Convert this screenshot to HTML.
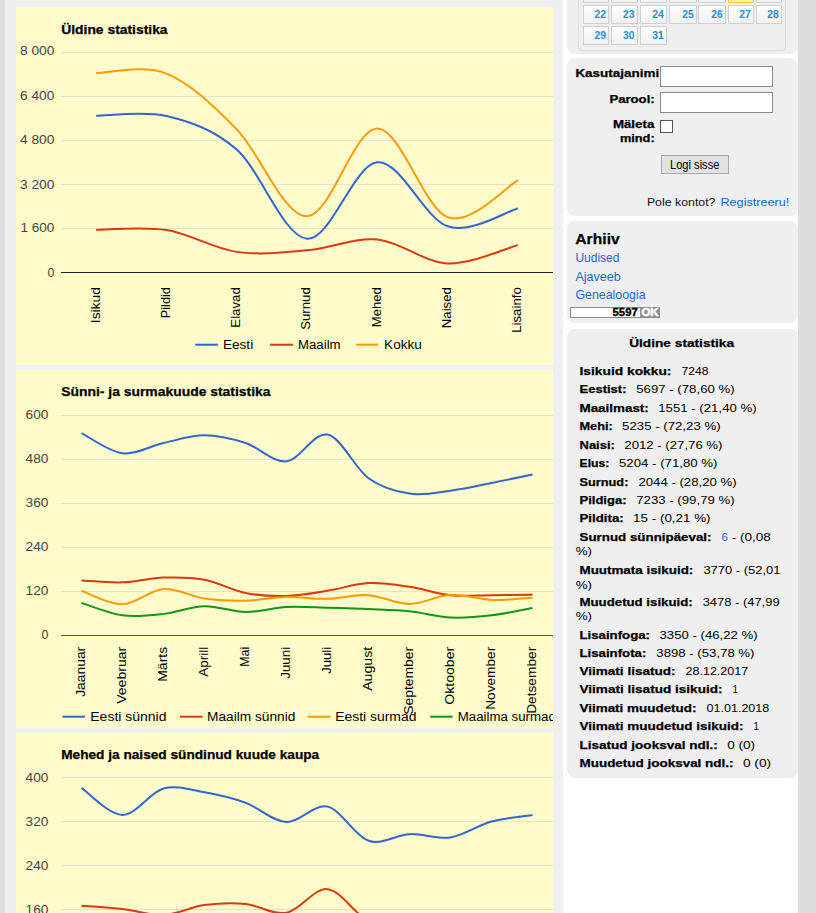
<!DOCTYPE html>
<html><head><meta charset="utf-8">
<style>
html,body{margin:0;padding:0;}
body{width:816px;height:913px;overflow:hidden;position:relative;background:#efefef;font-family:"Liberation Sans", sans-serif;}
.abs{position:absolute;}
svg text{font-family:"Liberation Sans", sans-serif;}
</style></head><body>
<div class="abs" style="left:0;top:0;width:5px;height:913px;background:#dddddd"></div>
<div class="abs" style="left:798px;top:0;width:18px;height:913px;background:#dddddd"></div>
<div class="abs" style="left:563px;top:0;width:235px;height:913px;background:#fff"></div>
<div class="abs" style="left:16px;top:7px;width:537px;height:358px;background:#fffccc"></div>
<div class="abs" style="left:16px;top:370px;width:537px;height:358px;background:#fffccc"></div>
<div class="abs" style="left:16px;top:732px;width:537px;height:1px;background:#f7f6de"></div>
<div class="abs" style="left:16px;top:733px;width:537px;height:358px;background:#fffccc"></div>
<svg class="abs" style="left:0;top:0" width="553" height="913" viewBox="0 0 553 913">
<defs><clipPath id="cp1"><rect x="16" y="7" width="537" height="358"/></clipPath>
<clipPath id="cp2"><rect x="16" y="370" width="537" height="358"/></clipPath>
<clipPath id="cp3"><rect x="16" y="732.5" width="537" height="358"/></clipPath></defs>
<g clip-path="url(#cp1)"><rect x="61" y="52" width="492" height="1" fill="#e3e2ca"/>
<rect x="61" y="96" width="492" height="1" fill="#e3e2ca"/>
<rect x="61" y="140" width="492" height="1" fill="#e3e2ca"/>
<rect x="61" y="184" width="492" height="1" fill="#e3e2ca"/>
<rect x="61" y="228" width="492" height="1" fill="#e3e2ca"/>
<text x="54.40" y="55.35" font-size="12.8" fill="#444" text-anchor="end" textLength="34.50" lengthAdjust="spacingAndGlyphs">8 000</text>
<text x="54.40" y="99.60" font-size="12.8" fill="#444" text-anchor="end" textLength="34.50" lengthAdjust="spacingAndGlyphs">6 400</text>
<text x="54.40" y="143.60" font-size="12.8" fill="#444" text-anchor="end" textLength="34.50" lengthAdjust="spacingAndGlyphs">4 800</text>
<text x="54.40" y="188.60" font-size="12.8" fill="#444" text-anchor="end" textLength="34.50" lengthAdjust="spacingAndGlyphs">3 200</text>
<text x="54.40" y="232.40" font-size="12.8" fill="#444" text-anchor="end" textLength="34.00" lengthAdjust="spacingAndGlyphs">1 600</text>
<text x="54.40" y="276.50" font-size="12.8" fill="#444" text-anchor="end" textLength="6.90" lengthAdjust="spacingAndGlyphs">0</text>
<rect x="61" y="272" width="492" height="1" fill="#222222"/>
<g transform="translate(99.54,287.20) rotate(-90)"><text x="0.00" y="0.00" font-size="12.3" text-anchor="end" textLength="36.00" lengthAdjust="spacingAndGlyphs">Isikud</text></g>
<g transform="translate(169.83,287.20) rotate(-90)"><text x="0.00" y="0.00" font-size="12.3" text-anchor="end" textLength="31.00" lengthAdjust="spacingAndGlyphs">Pildid</text></g>
<g transform="translate(240.11,287.20) rotate(-90)"><text x="0.00" y="0.00" font-size="12.3" text-anchor="end" textLength="40.50" lengthAdjust="spacingAndGlyphs">Elavad</text></g>
<g transform="translate(310.40,287.20) rotate(-90)"><text x="0.00" y="0.00" font-size="12.3" text-anchor="end" textLength="42.60" lengthAdjust="spacingAndGlyphs">Surnud</text></g>
<g transform="translate(380.69,287.20) rotate(-90)"><text x="0.00" y="0.00" font-size="12.3" text-anchor="end" textLength="40.00" lengthAdjust="spacingAndGlyphs">Mehed</text></g>
<g transform="translate(450.97,287.20) rotate(-90)"><text x="0.00" y="0.00" font-size="12.3" text-anchor="end" textLength="41.00" lengthAdjust="spacingAndGlyphs">Naised</text></g>
<g transform="translate(521.26,287.20) rotate(-90)"><text x="0.00" y="0.00" font-size="12.3" text-anchor="end" textLength="45.60" lengthAdjust="spacingAndGlyphs">Lisainfo</text></g>
<path d="M96.14,115.83 C107.86,115.86 143.00,110.40 166.43,116.03 C189.86,121.65 213.29,129.11 236.71,149.57 C260.14,170.04 283.57,236.70 307.00,238.81 C330.43,240.92 353.86,164.31 377.29,162.22 C400.71,160.14 424.14,218.60 447.57,226.30 C471.00,234.00 506.14,211.40 517.86,208.43" fill="none" stroke="#3366cc" stroke-width="2"/>
<path d="M96.14,229.85 C107.86,229.88 143.00,226.34 166.43,230.01 C189.86,233.68 213.29,248.48 236.71,251.88 C260.14,255.27 283.57,252.43 307.00,250.36 C330.43,248.30 353.86,237.32 377.29,239.50 C400.71,241.68 424.14,262.49 447.57,263.43 C471.00,264.36 506.14,248.19 517.86,245.14" fill="none" stroke="#dc3912" stroke-width="2"/>
<path d="M96.14,73.18 C107.86,73.25 143.00,64.22 166.43,73.59 C189.86,82.96 213.29,105.61 236.71,129.39 C260.14,153.17 283.57,216.43 307.00,216.29 C330.43,216.15 353.86,128.39 377.29,128.54 C400.71,128.68 424.14,208.53 447.57,217.17 C471.00,225.81 506.14,186.51 517.86,180.38" fill="none" stroke="#ff9900" stroke-width="2"/>
<rect x="195.30" y="343.70" width="22.60" height="2" fill="#3366cc"/>
<text x="222.90" y="349.10" font-size="12.3" textLength="30.30" lengthAdjust="spacingAndGlyphs">Eesti</text>
<rect x="270.00" y="343.70" width="23.00" height="2" fill="#dc3912"/>
<text x="298.00" y="349.10" font-size="12.3" textLength="42.60" lengthAdjust="spacingAndGlyphs">Maailm</text>
<rect x="356.20" y="343.70" width="22.00" height="2" fill="#ff9900"/>
<text x="384.10" y="349.10" font-size="12.3" textLength="37.70" lengthAdjust="spacingAndGlyphs">Kokku</text>
<text x="61.20" y="33.80" font-size="12.3" font-weight="bold" fill="#000" textLength="106.40" lengthAdjust="spacingAndGlyphs" stroke="#000" stroke-width="0.25">Üldine statistika</text></g>
<g clip-path="url(#cp2)"><rect x="61" y="415" width="492" height="1" fill="#e3e2ca"/>
<rect x="61" y="459" width="492" height="1" fill="#e3e2ca"/>
<rect x="61" y="503" width="492" height="1" fill="#e3e2ca"/>
<rect x="61" y="547" width="492" height="1" fill="#e3e2ca"/>
<rect x="61" y="591" width="492" height="1" fill="#e3e2ca"/>
<text x="48.40" y="418.65" font-size="12.8" fill="#444" text-anchor="end" textLength="22.80" lengthAdjust="spacingAndGlyphs">600</text>
<text x="48.40" y="462.65" font-size="12.8" fill="#444" text-anchor="end" textLength="22.80" lengthAdjust="spacingAndGlyphs">480</text>
<text x="48.40" y="506.65" font-size="12.8" fill="#444" text-anchor="end" textLength="22.80" lengthAdjust="spacingAndGlyphs">360</text>
<text x="48.40" y="550.65" font-size="12.8" fill="#444" text-anchor="end" textLength="22.80" lengthAdjust="spacingAndGlyphs">240</text>
<text x="48.40" y="594.65" font-size="12.8" fill="#444" text-anchor="end" textLength="22.80" lengthAdjust="spacingAndGlyphs">120</text>
<text x="48.40" y="638.65" font-size="12.8" fill="#444" text-anchor="end" textLength="6.90" lengthAdjust="spacingAndGlyphs">0</text>
<rect x="61" y="635" width="492" height="1" fill="#555555"/>
<g transform="translate(84.90,646.80) rotate(-90)"><text x="0.00" y="0.00" font-size="12.3" text-anchor="end" textLength="50.00" lengthAdjust="spacingAndGlyphs">Jaanuar</text></g>
<g transform="translate(125.90,646.80) rotate(-90)"><text x="0.00" y="0.00" font-size="12.3" text-anchor="end" textLength="57.00" lengthAdjust="spacingAndGlyphs">Veebruar</text></g>
<g transform="translate(166.90,646.80) rotate(-90)"><text x="0.00" y="0.00" font-size="12.3" text-anchor="end" textLength="35.00" lengthAdjust="spacingAndGlyphs">Märts</text></g>
<g transform="translate(207.90,646.80) rotate(-90)"><text x="0.00" y="0.00" font-size="12.3" text-anchor="end" textLength="30.00" lengthAdjust="spacingAndGlyphs">Aprill</text></g>
<g transform="translate(248.90,646.80) rotate(-90)"><text x="0.00" y="0.00" font-size="12.3" text-anchor="end" textLength="20.00" lengthAdjust="spacingAndGlyphs">Mai</text></g>
<g transform="translate(289.90,646.80) rotate(-90)"><text x="0.00" y="0.00" font-size="12.3" text-anchor="end" textLength="32.00" lengthAdjust="spacingAndGlyphs">Juuni</text></g>
<g transform="translate(330.90,646.80) rotate(-90)"><text x="0.00" y="0.00" font-size="12.3" text-anchor="end" textLength="27.00" lengthAdjust="spacingAndGlyphs">Juuli</text></g>
<g transform="translate(371.90,646.80) rotate(-90)"><text x="0.00" y="0.00" font-size="12.3" text-anchor="end" textLength="44.00" lengthAdjust="spacingAndGlyphs">August</text></g>
<g transform="translate(412.90,646.80) rotate(-90)"><text x="0.00" y="0.00" font-size="12.3" text-anchor="end" textLength="68.00" lengthAdjust="spacingAndGlyphs">September</text></g>
<g transform="translate(453.90,646.80) rotate(-90)"><text x="0.00" y="0.00" font-size="12.3" text-anchor="end" textLength="58.00" lengthAdjust="spacingAndGlyphs">Oktoober</text></g>
<g transform="translate(494.90,646.80) rotate(-90)"><text x="0.00" y="0.00" font-size="12.3" text-anchor="end" textLength="63.00" lengthAdjust="spacingAndGlyphs">November</text></g>
<g transform="translate(535.90,646.80) rotate(-90)"><text x="0.00" y="0.00" font-size="12.3" text-anchor="end" textLength="67.00" lengthAdjust="spacingAndGlyphs">Detsember</text></g>
<path d="M81.50,433.10 C88.33,436.46 108.83,451.62 122.50,453.27 C136.17,454.92 149.83,445.99 163.50,443.00 C177.17,440.01 190.83,435.30 204.50,435.30 C218.17,435.30 231.83,438.66 245.50,443.00 C259.17,447.34 272.83,462.74 286.50,461.33 C300.17,459.93 313.83,431.76 327.50,434.57 C341.17,437.38 354.83,468.36 368.50,478.20 C382.17,488.04 395.83,491.52 409.50,493.60 C423.17,495.68 436.83,492.44 450.50,490.67 C464.17,488.89 477.83,485.66 491.50,482.97 C505.17,480.28 525.67,475.94 532.50,474.53" fill="none" stroke="#3366cc" stroke-width="2"/>
<path d="M81.50,580.50 C88.33,580.81 108.83,582.82 122.50,582.33 C136.17,581.84 149.83,577.99 163.50,577.57 C177.17,577.14 190.83,577.20 204.50,579.77 C218.17,582.33 231.83,590.28 245.50,592.97 C259.17,595.66 272.83,596.27 286.50,595.90 C300.17,595.53 313.83,592.91 327.50,590.77 C341.17,588.63 354.83,583.74 368.50,583.07 C382.17,582.39 395.83,584.72 409.50,586.73 C423.17,588.75 436.83,593.76 450.50,595.17 C464.17,596.57 477.83,595.23 491.50,595.17 C505.17,595.11 525.67,594.86 532.50,594.80" fill="none" stroke="#dc3912" stroke-width="2"/>
<path d="M81.50,590.77 C88.33,593.03 108.83,604.64 122.50,604.33 C136.17,604.03 149.83,589.91 163.50,588.93 C177.17,587.96 190.83,596.51 204.50,598.47 C218.17,600.42 231.83,600.91 245.50,600.67 C259.17,600.42 272.83,597.31 286.50,597.00 C300.17,596.69 313.83,599.14 327.50,598.83 C341.17,598.53 354.83,594.31 368.50,595.17 C382.17,596.02 395.83,604.03 409.50,603.97 C423.17,603.91 436.83,595.47 450.50,594.80 C464.17,594.13 477.83,599.44 491.50,599.93 C505.17,600.42 525.67,598.10 532.50,597.73" fill="none" stroke="#ff9900" stroke-width="2"/>
<path d="M81.50,602.87 C88.33,604.94 108.83,613.50 122.50,615.33 C136.17,617.17 149.83,615.39 163.50,613.87 C177.17,612.34 190.83,606.47 204.50,606.17 C218.17,605.86 231.83,611.91 245.50,612.03 C259.17,612.16 272.83,607.63 286.50,606.90 C300.17,606.17 313.83,607.27 327.50,607.63 C341.17,608.00 354.83,608.49 368.50,609.10 C382.17,609.71 395.83,609.89 409.50,611.30 C423.17,612.71 436.83,616.86 450.50,617.53 C464.17,618.21 477.83,616.92 491.50,615.33 C505.17,613.74 525.67,609.22 532.50,608.00" fill="none" stroke="#109618" stroke-width="2"/>
<rect x="62.40" y="715.70" width="22.60" height="2" fill="#3366cc"/>
<text x="90.30" y="721.10" font-size="12.3" textLength="76.20" lengthAdjust="spacingAndGlyphs">Eesti sünnid</text>
<rect x="180.00" y="715.70" width="22.60" height="2" fill="#dc3912"/>
<text x="207.00" y="721.10" font-size="12.3" textLength="88.30" lengthAdjust="spacingAndGlyphs">Maailm sünnid</text>
<rect x="307.70" y="715.70" width="22.90" height="2" fill="#ff9900"/>
<text x="335.20" y="721.10" font-size="12.3" textLength="81.20" lengthAdjust="spacingAndGlyphs">Eesti surmad</text>
<rect x="430.20" y="715.70" width="22.40" height="2" fill="#109618"/>
<text x="457.80" y="721.10" font-size="12.3" textLength="98.00" lengthAdjust="spacingAndGlyphs">Maailma surmad</text>
<text x="61.20" y="396.00" font-size="12.3" font-weight="bold" fill="#000" textLength="209.30" lengthAdjust="spacingAndGlyphs" stroke="#000" stroke-width="0.25">Sünni- ja surmakuude statistika</text></g>
<g clip-path="url(#cp3)"><rect x="61" y="777" width="492" height="1" fill="#e3e2ca"/>
<rect x="61" y="821" width="492" height="1" fill="#e3e2ca"/>
<rect x="61" y="865" width="492" height="1" fill="#e3e2ca"/>
<rect x="61" y="909" width="492" height="1" fill="#e3e2ca"/>
<rect x="61" y="953" width="492" height="1" fill="#e3e2ca"/>
<text x="48.40" y="781.80" font-size="12.8" fill="#444" text-anchor="end" textLength="22.80" lengthAdjust="spacingAndGlyphs">400</text>
<text x="48.40" y="825.80" font-size="12.8" fill="#444" text-anchor="end" textLength="22.80" lengthAdjust="spacingAndGlyphs">320</text>
<text x="48.40" y="869.80" font-size="12.8" fill="#444" text-anchor="end" textLength="22.80" lengthAdjust="spacingAndGlyphs">240</text>
<text x="48.40" y="913.80" font-size="12.8" fill="#444" text-anchor="end" textLength="22.80" lengthAdjust="spacingAndGlyphs">160</text>
<text x="48.40" y="957.80" font-size="12.8" fill="#444" text-anchor="end" textLength="15.20" lengthAdjust="spacingAndGlyphs">80</text>
<text x="48.40" y="1001.80" font-size="12.8" fill="#444" text-anchor="end" textLength="6.90" lengthAdjust="spacingAndGlyphs">0</text>
<rect x="61" y="997" width="492" height="1" fill="#555555"/>
<g transform="translate(84.90,1009.00) rotate(-90)"><text x="0.00" y="0.00" font-size="12.3" text-anchor="end" textLength="50.00" lengthAdjust="spacingAndGlyphs">Jaanuar</text></g>
<g transform="translate(125.90,1009.00) rotate(-90)"><text x="0.00" y="0.00" font-size="12.3" text-anchor="end" textLength="57.00" lengthAdjust="spacingAndGlyphs">Veebruar</text></g>
<g transform="translate(166.90,1009.00) rotate(-90)"><text x="0.00" y="0.00" font-size="12.3" text-anchor="end" textLength="35.00" lengthAdjust="spacingAndGlyphs">Märts</text></g>
<g transform="translate(207.90,1009.00) rotate(-90)"><text x="0.00" y="0.00" font-size="12.3" text-anchor="end" textLength="30.00" lengthAdjust="spacingAndGlyphs">Aprill</text></g>
<g transform="translate(248.90,1009.00) rotate(-90)"><text x="0.00" y="0.00" font-size="12.3" text-anchor="end" textLength="20.00" lengthAdjust="spacingAndGlyphs">Mai</text></g>
<g transform="translate(289.90,1009.00) rotate(-90)"><text x="0.00" y="0.00" font-size="12.3" text-anchor="end" textLength="32.00" lengthAdjust="spacingAndGlyphs">Juuni</text></g>
<g transform="translate(330.90,1009.00) rotate(-90)"><text x="0.00" y="0.00" font-size="12.3" text-anchor="end" textLength="27.00" lengthAdjust="spacingAndGlyphs">Juuli</text></g>
<g transform="translate(371.90,1009.00) rotate(-90)"><text x="0.00" y="0.00" font-size="12.3" text-anchor="end" textLength="44.00" lengthAdjust="spacingAndGlyphs">August</text></g>
<g transform="translate(412.90,1009.00) rotate(-90)"><text x="0.00" y="0.00" font-size="12.3" text-anchor="end" textLength="68.00" lengthAdjust="spacingAndGlyphs">September</text></g>
<g transform="translate(453.90,1009.00) rotate(-90)"><text x="0.00" y="0.00" font-size="12.3" text-anchor="end" textLength="58.00" lengthAdjust="spacingAndGlyphs">Oktoober</text></g>
<g transform="translate(494.90,1009.00) rotate(-90)"><text x="0.00" y="0.00" font-size="12.3" text-anchor="end" textLength="63.00" lengthAdjust="spacingAndGlyphs">November</text></g>
<g transform="translate(535.90,1009.00) rotate(-90)"><text x="0.00" y="0.00" font-size="12.3" text-anchor="end" textLength="67.00" lengthAdjust="spacingAndGlyphs">Detsember</text></g>
<path d="M81.50,787.95 C88.33,792.44 108.83,814.81 122.50,814.90 C136.17,814.99 149.83,792.26 163.50,788.50 C177.17,784.74 190.83,789.97 204.50,792.35 C218.17,794.73 231.83,797.85 245.50,802.80 C259.17,807.75 272.83,821.41 286.50,822.05 C300.17,822.69 313.83,803.53 327.50,806.65 C341.17,809.77 354.83,836.17 368.50,840.75 C382.17,845.33 395.83,834.70 409.50,834.15 C423.17,833.60 436.83,839.56 450.50,837.45 C464.17,835.34 477.83,825.26 491.50,821.50 C505.17,817.74 525.67,816.00 532.50,814.90" fill="none" stroke="#3366cc" stroke-width="2"/>
<path d="M81.50,905.65 C88.33,906.20 108.83,907.39 122.50,908.95 C136.17,910.51 149.83,915.64 163.50,915.00 C177.17,914.36 190.83,906.93 204.50,905.10 C218.17,903.27 231.83,902.72 245.50,904.00 C259.17,905.28 272.83,915.27 286.50,912.80 C300.17,910.32 313.83,887.87 327.50,889.15 C341.17,890.43 354.83,915.27 368.50,920.50 C382.17,925.73 395.83,920.50 409.50,920.50 C423.17,920.50 436.83,920.50 450.50,920.50 C464.17,920.50 477.83,920.50 491.50,920.50 C505.17,920.50 525.67,920.50 532.50,920.50" fill="none" stroke="#dc3912" stroke-width="2"/>
<text x="61.20" y="758.50" font-size="12.3" font-weight="bold" fill="#000" textLength="258.00" lengthAdjust="spacingAndGlyphs" stroke="#000" stroke-width="0.25">Mehed ja naised sündinud kuude kaupa</text></g>
</svg>
<div class="abs" style="left:567px;top:-20px;width:231px;height:74px;background:#efefef;border-radius:8px"></div>
<div class="abs" style="left:567px;top:58px;width:231px;height:157.6px;background:#efefef;border-radius:8px"></div>
<div class="abs" style="left:567px;top:221px;width:231px;height:101.8px;background:#efefef;border-radius:8px"></div>
<div class="abs" style="left:567px;top:329.3px;width:231px;height:449px;background:#efefef;border-radius:8px"></div>
<div class="abs" style="left:578px;top:-30px;width:206px;height:79px;border:1px solid #dcdcdc;border-radius:4px"></div>
<div class="abs" style="left:583px;top:-16px;width:24.00px;height:17.00px;border:1px solid #cfcfcf;background:linear-gradient(#fdfdfd,#f1f1f1)"></div>
<div class="abs" style="left:611.2px;top:-16px;width:24.40px;height:17.00px;border:1px solid #cfcfcf;background:linear-gradient(#fdfdfd,#f1f1f1)"></div>
<div class="abs" style="left:640px;top:-16px;width:24.70px;height:17.00px;border:1px solid #cfcfcf;background:linear-gradient(#fdfdfd,#f1f1f1)"></div>
<div class="abs" style="left:669.1px;top:-16px;width:25.70px;height:17.00px;border:1px solid #cfcfcf;background:linear-gradient(#fdfdfd,#f1f1f1)"></div>
<div class="abs" style="left:698.3px;top:-16px;width:25.50px;height:17.00px;border:1px solid #cfcfcf;background:linear-gradient(#fdfdfd,#f1f1f1)"></div>
<div class="abs" style="left:728.1px;top:-16px;width:23.70px;height:17.00px;border:1px solid #fbcf3c;background:#fdeea6"></div>
<div class="abs" style="left:756.3px;top:-16px;width:23.40px;height:17.00px;border:1px solid #cfcfcf;background:linear-gradient(#fdfdfd,#f1f1f1)"></div>
<div class="abs" style="left:583px;top:5px;width:24.00px;height:17.00px;border:1px solid #cfcfcf;background:linear-gradient(#fdfdfd,#f1f1f1)"></div>
<div class="abs" style="left:611.2px;top:5px;width:24.40px;height:17.00px;border:1px solid #cfcfcf;background:linear-gradient(#fdfdfd,#f1f1f1)"></div>
<div class="abs" style="left:640px;top:5px;width:24.70px;height:17.00px;border:1px solid #cfcfcf;background:linear-gradient(#fdfdfd,#f1f1f1)"></div>
<div class="abs" style="left:669.1px;top:5px;width:25.70px;height:17.00px;border:1px solid #cfcfcf;background:linear-gradient(#fdfdfd,#f1f1f1)"></div>
<div class="abs" style="left:698.3px;top:5px;width:25.50px;height:17.00px;border:1px solid #cfcfcf;background:linear-gradient(#fdfdfd,#f1f1f1)"></div>
<div class="abs" style="left:728.1px;top:5px;width:23.70px;height:17.00px;border:1px solid #cfcfcf;background:linear-gradient(#fdfdfd,#f1f1f1)"></div>
<div class="abs" style="left:756.3px;top:5px;width:23.40px;height:17.00px;border:1px solid #cfcfcf;background:linear-gradient(#fdfdfd,#f1f1f1)"></div>
<div class="abs" style="left:583px;top:26px;width:24.00px;height:17.00px;border:1px solid #cfcfcf;background:linear-gradient(#fdfdfd,#f1f1f1)"></div>
<div class="abs" style="left:611.2px;top:26px;width:24.40px;height:17.00px;border:1px solid #cfcfcf;background:linear-gradient(#fdfdfd,#f1f1f1)"></div>
<div class="abs" style="left:640px;top:26px;width:24.70px;height:17.00px;border:1px solid #cfcfcf;background:linear-gradient(#fdfdfd,#f1f1f1)"></div>
<div class="abs" style="left:660px;top:66px;width:111px;height:18.6px;border:1px solid #8a8a8a;background:#fff"></div>
<div class="abs" style="left:660px;top:92.4px;width:111px;height:18.2px;border:1px solid #8a8a8a;background:#fff"></div>
<div class="abs" style="left:660.2px;top:120.3px;width:10.9px;height:10.5px;border:1px solid #555;background:#fff"></div>
<div class="abs" style="left:661px;top:155px;width:65.8px;height:17px;border:1px solid #a9a9a9;background:#e1e1e1"></div>
<div class="abs" style="left:570px;top:307.1px;width:88.1px;height:8.7px;border:1px solid #8a8a8a;background:#fff"></div>
<div class="abs" style="left:640px;top:308.1px;width:19.1px;height:8.7px;background:#8f8f8f"></div>
<svg class="abs" style="left:0;top:0" width="816" height="913" viewBox="0 0 816 913"><text x="606.00" y="18.10" font-size="11" font-weight="bold" fill="#2390d0" text-anchor="end" textLength="11.50" lengthAdjust="spacingAndGlyphs">22</text>
<text x="634.60" y="18.10" font-size="11" font-weight="bold" fill="#2390d0" text-anchor="end" textLength="11.50" lengthAdjust="spacingAndGlyphs">23</text>
<text x="663.70" y="18.10" font-size="11" font-weight="bold" fill="#2390d0" text-anchor="end" textLength="11.50" lengthAdjust="spacingAndGlyphs">24</text>
<text x="693.80" y="18.10" font-size="11" font-weight="bold" fill="#2390d0" text-anchor="end" textLength="11.50" lengthAdjust="spacingAndGlyphs">25</text>
<text x="722.80" y="18.10" font-size="11" font-weight="bold" fill="#2390d0" text-anchor="end" textLength="11.50" lengthAdjust="spacingAndGlyphs">26</text>
<text x="750.80" y="18.10" font-size="11" font-weight="bold" fill="#2390d0" text-anchor="end" textLength="11.50" lengthAdjust="spacingAndGlyphs">27</text>
<text x="778.70" y="18.10" font-size="11" font-weight="bold" fill="#2390d0" text-anchor="end" textLength="11.50" lengthAdjust="spacingAndGlyphs">28</text>
<text x="606.00" y="39.10" font-size="11" font-weight="bold" fill="#2390d0" text-anchor="end" textLength="11.50" lengthAdjust="spacingAndGlyphs">29</text>
<text x="634.60" y="39.10" font-size="11" font-weight="bold" fill="#2390d0" text-anchor="end" textLength="11.50" lengthAdjust="spacingAndGlyphs">30</text>
<text x="663.70" y="39.10" font-size="11" font-weight="bold" fill="#2390d0" text-anchor="end" textLength="11.50" lengthAdjust="spacingAndGlyphs">31</text>
<text x="575.40" y="76.90" font-size="11" font-weight="bold" stroke="#000" stroke-width="0.25" fill="#000" textLength="83.80" lengthAdjust="spacingAndGlyphs">Kasutajanimi</text>
<text x="654.70" y="102.90" font-size="11" font-weight="bold" stroke="#000" stroke-width="0.25" fill="#000" text-anchor="end" textLength="45.30" lengthAdjust="spacingAndGlyphs">Parool:</text>
<text x="654.30" y="127.70" font-size="11" font-weight="bold" stroke="#000" stroke-width="0.25" fill="#000" text-anchor="end" textLength="41.40" lengthAdjust="spacingAndGlyphs">Mäleta</text>
<text x="654.70" y="141.60" font-size="11" font-weight="bold" stroke="#000" stroke-width="0.25" fill="#000" text-anchor="end" textLength="34.80" lengthAdjust="spacingAndGlyphs">mind:</text>
<text x="670.00" y="169.00" font-size="12.5" fill="#000" textLength="49.40" lengthAdjust="spacingAndGlyphs">Logi sisse</text>
<text x="646.90" y="206.10" font-size="11.8" fill="#111" textLength="68.60" lengthAdjust="spacingAndGlyphs">Pole kontot?</text>
<text x="720.40" y="206.10" font-size="11.8" fill="#2266d0" textLength="69.00" lengthAdjust="spacingAndGlyphs">Registreeru!</text>
<text x="575.30" y="244.10" font-size="14.5" font-weight="bold" stroke="#000" stroke-width="0.25" fill="#000" textLength="44.40" lengthAdjust="spacingAndGlyphs">Arhiiv</text>
<text x="575.40" y="261.80" font-size="12.1" fill="#2266d0" textLength="44.00" lengthAdjust="spacingAndGlyphs">Uudised</text>
<text x="575.40" y="280.90" font-size="12.1" fill="#2266d0" textLength="45.50" lengthAdjust="spacingAndGlyphs">Ajaveeb</text>
<text x="575.40" y="298.50" font-size="12.1" fill="#2266d0" textLength="70.20" lengthAdjust="spacingAndGlyphs">Genealoogia</text>
<text x="637.70" y="315.90" font-size="10" font-weight="bold" stroke="#000" stroke-width="0.35" fill="#000" text-anchor="end" textLength="25.10" lengthAdjust="spacingAndGlyphs">5597</text>
<text x="641.40" y="315.90" font-size="10" font-weight="bold" stroke="#fff" stroke-width="0.6" fill="#fff" textLength="17.10" lengthAdjust="spacingAndGlyphs">OK</text>
<text x="629.20" y="347.00" font-size="11.6" font-weight="bold" stroke="#000" stroke-width="0.25" fill="#000" textLength="104.90" lengthAdjust="spacingAndGlyphs">Üldine statistika</text>
<text x="579.50" y="374.90" font-size="11.2" font-weight="bold" stroke="#000" stroke-width="0.25" fill="#000" textLength="91.90" lengthAdjust="spacingAndGlyphs">Isikuid kokku:</text>
<text x="681.40" y="374.90" font-size="11.2" fill="#000" textLength="27.00" lengthAdjust="spacingAndGlyphs">7248</text>
<text x="579.50" y="392.80" font-size="11.2" font-weight="bold" stroke="#000" stroke-width="0.25" fill="#000" textLength="47.00" lengthAdjust="spacingAndGlyphs">Eestist:</text>
<text x="636.20" y="392.80" font-size="11.2" fill="#000" textLength="98.50" lengthAdjust="spacingAndGlyphs">5697 - (78,60 %)</text>
<text x="579.50" y="411.60" font-size="11.2" font-weight="bold" stroke="#000" stroke-width="0.25" fill="#000" textLength="69.30" lengthAdjust="spacingAndGlyphs">Maailmast:</text>
<text x="658.20" y="411.60" font-size="11.2" fill="#000" textLength="98.50" lengthAdjust="spacingAndGlyphs">1551 - (21,40 %)</text>
<text x="579.50" y="429.80" font-size="11.2" font-weight="bold" stroke="#000" stroke-width="0.25" fill="#000" textLength="33.20" lengthAdjust="spacingAndGlyphs">Mehi:</text>
<text x="622.10" y="429.80" font-size="11.2" fill="#000" textLength="98.50" lengthAdjust="spacingAndGlyphs">5235 - (72,23 %)</text>
<text x="579.50" y="448.60" font-size="11.2" font-weight="bold" stroke="#000" stroke-width="0.25" fill="#000" textLength="35.40" lengthAdjust="spacingAndGlyphs">Naisi:</text>
<text x="624.30" y="448.60" font-size="11.2" fill="#000" textLength="98.20" lengthAdjust="spacingAndGlyphs">2012 - (27,76 %)</text>
<text x="579.50" y="466.80" font-size="11.2" font-weight="bold" stroke="#000" stroke-width="0.25" fill="#000" textLength="29.80" lengthAdjust="spacingAndGlyphs">Elus:</text>
<text x="619.00" y="466.80" font-size="11.2" fill="#000" textLength="98.50" lengthAdjust="spacingAndGlyphs">5204 - (71,80 %)</text>
<text x="579.50" y="485.60" font-size="11.2" font-weight="bold" stroke="#000" stroke-width="0.25" fill="#000" textLength="48.90" lengthAdjust="spacingAndGlyphs">Surnud:</text>
<text x="638.40" y="485.60" font-size="11.2" fill="#000" textLength="98.20" lengthAdjust="spacingAndGlyphs">2044 - (28,20 %)</text>
<text x="579.50" y="503.50" font-size="11.2" font-weight="bold" stroke="#000" stroke-width="0.25" fill="#000" textLength="47.00" lengthAdjust="spacingAndGlyphs">Pildiga:</text>
<text x="636.20" y="503.50" font-size="11.2" fill="#000" textLength="98.50" lengthAdjust="spacingAndGlyphs">7233 - (99,79 %)</text>
<text x="579.50" y="522.40" font-size="11.2" font-weight="bold" stroke="#000" stroke-width="0.25" fill="#000" textLength="44.20" lengthAdjust="spacingAndGlyphs">Pildita:</text>
<text x="633.10" y="522.40" font-size="11.2" fill="#000" textLength="77.50" lengthAdjust="spacingAndGlyphs">15 - (0,21 %)</text>
<text x="579.50" y="540.50" font-size="11.2" font-weight="bold" stroke="#000" stroke-width="0.25" fill="#000" textLength="132.00" lengthAdjust="spacingAndGlyphs">Surnud sünnipäeval:</text>
<text x="721.60" y="540.50" font-size="11.2" fill="#2266d0" textLength="6.40" lengthAdjust="spacingAndGlyphs">6</text>
<text x="728.00" y="540.50" font-size="11.2" fill="#000" textLength="42.80" lengthAdjust="spacingAndGlyphs" xml:space="preserve"> - (0,08</text>
<text x="575.70" y="554.70" font-size="11.2" fill="#000" textLength="16.30" lengthAdjust="spacingAndGlyphs">%)</text>
<text x="579.50" y="574.20" font-size="11.2" font-weight="bold" stroke="#000" stroke-width="0.25" fill="#000" textLength="113.80" lengthAdjust="spacingAndGlyphs">Muutmata isikuid:</text>
<text x="703.40" y="574.20" font-size="11.2" fill="#000" textLength="77.10" lengthAdjust="spacingAndGlyphs">3770 - (52,01</text>
<text x="575.70" y="588.70" font-size="11.2" fill="#000" textLength="16.30" lengthAdjust="spacingAndGlyphs">%)</text>
<text x="579.50" y="605.50" font-size="11.2" font-weight="bold" stroke="#000" stroke-width="0.25" fill="#000" textLength="113.20" lengthAdjust="spacingAndGlyphs">Muudetud isikuid:</text>
<text x="702.70" y="605.50" font-size="11.2" fill="#000" textLength="76.90" lengthAdjust="spacingAndGlyphs">3478 - (47,99</text>
<text x="575.70" y="620.00" font-size="11.2" fill="#000" textLength="16.30" lengthAdjust="spacingAndGlyphs">%)</text>
<text x="579.50" y="638.80" font-size="11.2" font-weight="bold" stroke="#000" stroke-width="0.25" fill="#000" textLength="70.50" lengthAdjust="spacingAndGlyphs">Lisainfoga:</text>
<text x="659.50" y="638.80" font-size="11.2" fill="#000" textLength="98.10" lengthAdjust="spacingAndGlyphs">3350 - (46,22 %)</text>
<text x="579.50" y="656.70" font-size="11.2" font-weight="bold" stroke="#000" stroke-width="0.25" fill="#000" textLength="66.80" lengthAdjust="spacingAndGlyphs">Lisainfota:</text>
<text x="656.30" y="656.70" font-size="11.2" fill="#000" textLength="98.20" lengthAdjust="spacingAndGlyphs">3898 - (53,78 %)</text>
<text x="579.50" y="674.90" font-size="11.2" font-weight="bold" stroke="#000" stroke-width="0.25" fill="#000" textLength="96.00" lengthAdjust="spacingAndGlyphs">Viimati lisatud:</text>
<text x="685.50" y="674.90" font-size="11.2" fill="#000" textLength="62.70" lengthAdjust="spacingAndGlyphs">28.12.2017</text>
<text x="579.50" y="693.40" font-size="11.2" font-weight="bold" stroke="#000" stroke-width="0.25" fill="#000" textLength="143.00" lengthAdjust="spacingAndGlyphs">Viimati lisatud isikuid:</text>
<text x="732.50" y="693.40" font-size="11.2" fill="#000" textLength="5.50" lengthAdjust="spacingAndGlyphs">1</text>
<text x="579.50" y="711.60" font-size="11.2" font-weight="bold" stroke="#000" stroke-width="0.25" fill="#000" textLength="117.00" lengthAdjust="spacingAndGlyphs">Viimati muudetud:</text>
<text x="706.50" y="711.60" font-size="11.2" fill="#000" textLength="62.80" lengthAdjust="spacingAndGlyphs">01.01.2018</text>
<text x="579.50" y="730.40" font-size="11.2" font-weight="bold" stroke="#000" stroke-width="0.25" fill="#000" textLength="164.00" lengthAdjust="spacingAndGlyphs">Viimati muudetud isikuid:</text>
<text x="753.60" y="730.40" font-size="11.2" fill="#000" textLength="5.40" lengthAdjust="spacingAndGlyphs">1</text>
<text x="579.50" y="748.60" font-size="11.2" font-weight="bold" stroke="#000" stroke-width="0.25" fill="#000" textLength="138.30" lengthAdjust="spacingAndGlyphs">Lisatud jooksval ndl.:</text>
<text x="727.20" y="748.60" font-size="11.2" fill="#000" textLength="27.90" lengthAdjust="spacingAndGlyphs">0 (0)</text>
<text x="579.50" y="767.10" font-size="11.2" font-weight="bold" stroke="#000" stroke-width="0.25" fill="#000" textLength="154.00" lengthAdjust="spacingAndGlyphs">Muudetud jooksval ndl.:</text>
<text x="742.90" y="767.10" font-size="11.2" fill="#000" textLength="28.20" lengthAdjust="spacingAndGlyphs">0 (0)</text></svg>
</body></html>
